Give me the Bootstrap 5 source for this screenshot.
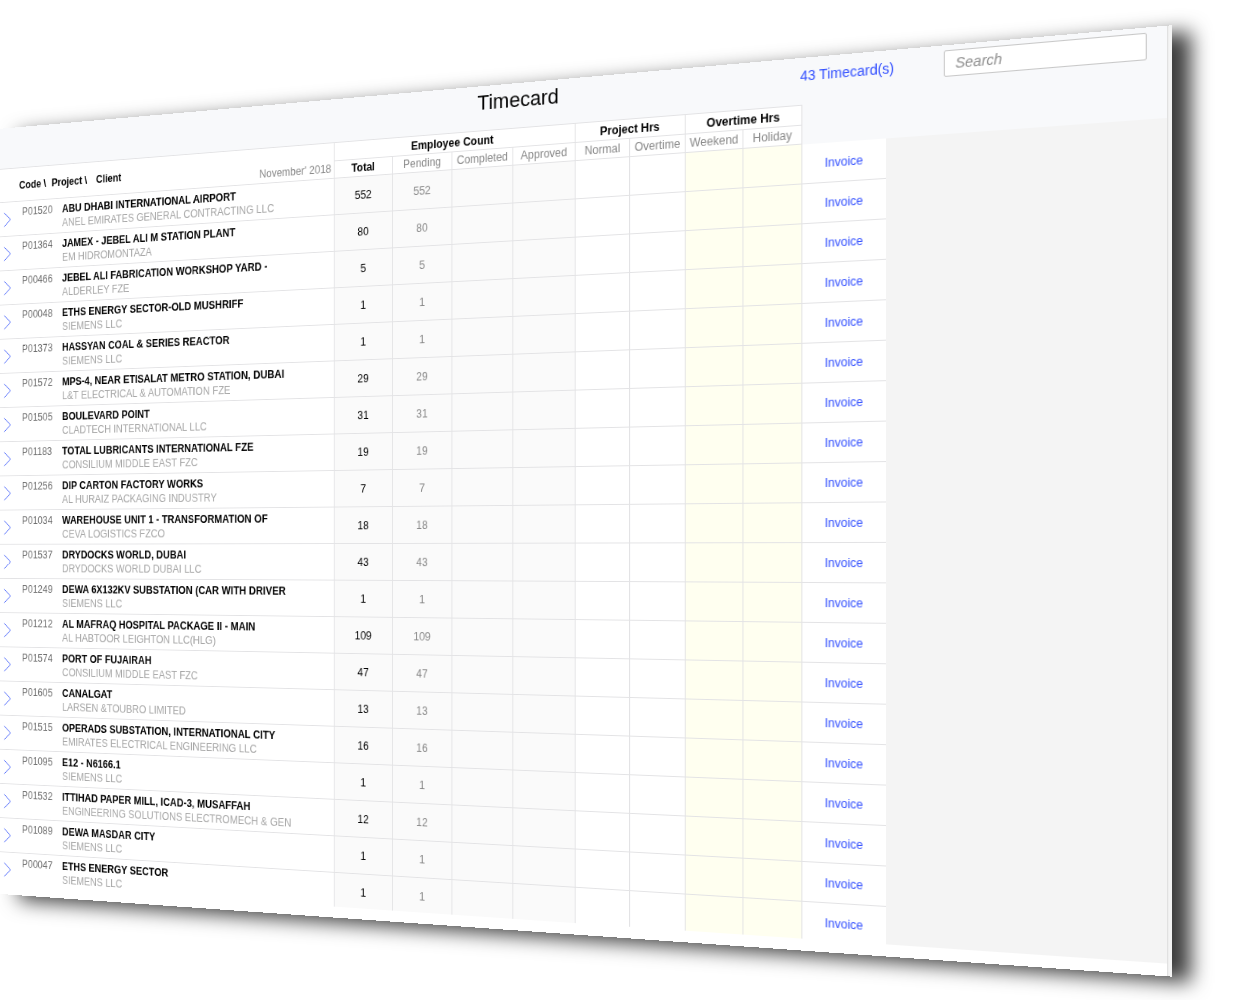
<!DOCTYPE html>
<html lang="en">
<head>
<meta charset="utf-8">
<meta name="viewport" content="width=device-width, initial-scale=1">
<title>Timecard</title>
<link href="https://cdn.jsdelivr.net/npm/bootstrap@5.3.0/dist/css/bootstrap.min.css" rel="stylesheet">
<style>
  :root { --line: #e3e3e5; --accent: #3350ff; --band: #f8f9fb; }
  body { font-family: "Liberation Sans", Arial, sans-serif; font-size: 12px; line-height: 16px; color: #000; }
  /* The shadow falls on the flat page, the sheet itself is turned in space */
  .stage { filter: drop-shadow(19px 6px 10px rgba(0, 0, 0, .76)); }
  .sheet {
    width: calc(100% + 42px);
    background: #fff;
    border-right: 3px solid #f4f4f4;
    transform-origin: 0 0;
    transform: matrix3d(.7293, -.08398, 0, -.0001515, 0, .854, 0, 0, 0, 0, 1, 0, 0, 128.8, 0, 1);
  }
  .sheet-inner { border-right: 1px solid #dedede; padding-bottom: 12px; background: linear-gradient(var(--band) 87px, #fff 87px); }
  .topbar { height: 47px; padding: 5px 18px 0 12px; }
  .topbar h1 { font-size: 22px; line-height: 26px; font-weight: 400; }
  .total-link { font-size: 14px; line-height: 26px; }
  .accent { color: var(--accent); text-decoration: none; }
  .search-box { width: 188px; height: 26px; padding: 0 10px; font-size: 14px; font-style: italic; border: 1px solid #c8c8c8; border-radius: 2px; }
  .search-box::placeholder { color: #8e8e8e; }
  .timecards { table-layout: fixed; width: 1026px; border-collapse: separate; border-spacing: 0; }
  .timecards th, .timecards td { padding: 0; border: 0 solid var(--line); text-align: center; vertical-align: middle; }
  .c-project { width: 429px; } .c-count { width: 69px; } .c-hours { width: 59px; } .c-rest { width: 60px; } .c-invoice { width: 83px; }
  .timecards thead th { height: 20px; background: #fff; border-top-width: 1px; border-right-width: 1px; }
  .timecards thead tr:first-child th[rowspan] { border-bottom-width: 1px; }
  .timecards thead tr:last-child th { font-weight: 400; color: #888; border-bottom-width: 1px; }
  .timecards thead tr:last-child th.strong-head { font-weight: 700; color: #000; }
  .timecards thead td { background: var(--band); }
  .timecards tbody td, .timecards tbody th { height: 40px; border-bottom-width: 1px; border-right-width: 1px; font-weight: 400; }
  .timecards tbody td:last-child { border-right-width: 0; }
  .timecards tbody tr:last-child > * { height: 37px; padding-top: 3px; border-bottom-width: 0; }
  .count-cell { background: #fafafa; }
  .rest-cell { background: #fffff0; }
  .soft { color: #888; }
  .project-line { padding-left: 5px; text-align: left; }
  .open-btn { width: 10px; border: 0; padding: 0; background: none; line-height: 0; }
  .code-text { width: 54px; margin-left: 15px; color: #6c6c6c; }
  .client-text { color: #a6a6a6; }
  .head-line { padding: 2px 3px 0 26px; }
  .head-code { width: 44px; } .head-project { width: 59px; }
  .rest-pane { background: #f4f4f4; margin-top: 40px; }
</style>
</head>
<body class="bg-white overflow-hidden min-vh-100">
<div class="stage">
  <div class="sheet">
    <div class="sheet-inner">
      <header class="topbar d-flex align-items-start">
        <div class="col"></div>
        <h1 class="m-0">Timecard</h1>
        <div class="col d-flex justify-content-end gap-5">
          <a href="#" class="accent total-link">43 Timecard(s)</a>
          <input type="search" class="search-box" placeholder="Search" aria-label="Search">
        </div>
      </header>
      <main class="d-flex">
        <table class="timecards flex-shrink-0">
          <colgroup>
            <col class="c-project"><col class="c-count"><col class="c-count"><col class="c-count"><col class="c-count">
            <col class="c-hours"><col class="c-hours"><col class="c-rest"><col class="c-rest"><col class="c-invoice">
          </colgroup>
          <thead>
            <tr>
              <th rowspan="2" scope="col">
                <div class="head-line d-flex align-items-center text-start">
                  <span class="head-code">Code \</span><span class="head-project">Project \</span><span>Client</span>
                  <span class="ms-auto align-self-end fw-normal soft pt-3">November' 2018</span>
                </div>
              </th>
              <th colspan="4" scope="colgroup">Employee Count</th>
              <th colspan="2" scope="colgroup">Project Hrs</th>
              <th colspan="2" scope="colgroup">Overtime Hrs</th>
              <td rowspan="2"></td>
            </tr>
            <tr>
              <th scope="col" class="strong-head">Total</th><th scope="col">Pending</th><th scope="col">Completed</th><th scope="col">Approved</th>
              <th scope="col">Normal</th><th scope="col">Overtime</th><th scope="col">Weekend</th><th scope="col">Holiday</th>
            </tr>
          </thead>
          <tbody id="rows"></tbody>
        </table>
        <aside class="rest-pane flex-fill"></aside>
      </main>
    </div>
  </div>
</div>
<script>
  const projects = [
    ["P01520", "ABU DHABI INTERNATIONAL AIRPORT", "ANEL EMIRATES GENERAL CONTRACTING LLC", 552],
    ["P01364", "JAMEX - JEBEL ALI M STATION PLANT", "EM HIDROMONTAZA", 80],
    ["P00466", "JEBEL ALI FABRICATION WORKSHOP YARD -", "ALDERLEY FZE", 5],
    ["P00048", "ETHS ENERGY SECTOR-OLD MUSHRIFF", "SIEMENS LLC", 1],
    ["P01373", "HASSYAN COAL &amp; SERIES REACTOR", "SIEMENS LLC", 1],
    ["P01572", "MPS-4, NEAR ETISALAT METRO STATION, DUBAI", "L&amp;T ELECTRICAL &amp; AUTOMATION FZE", 29],
    ["P01505", "BOULEVARD POINT", "CLADTECH INTERNATIONAL LLC", 31],
    ["P01183", "TOTAL LUBRICANTS INTERNATIONAL FZE", "CONSILIUM MIDDLE EAST FZC", 19],
    ["P01256", "DIP CARTON FACTORY WORKS", "AL HURAIZ PACKAGING INDUSTRY", 7],
    ["P01034", "WAREHOUSE UNIT 1 - TRANSFORMATION OF", "CEVA LOGISTICS FZCO", 18],
    ["P01537", "DRYDOCKS WORLD, DUBAI", "DRYDOCKS WORLD DUBAI LLC", 43],
    ["P01249", "DEWA 6X132KV SUBSTATION (CAR WITH DRIVER", "SIEMENS LLC", 1],
    ["P01212", "AL MAFRAQ HOSPITAL PACKAGE II - MAIN", "AL HABTOOR LEIGHTON LLC(HLG)", 109],
    ["P01574", "PORT OF FUJAIRAH", "CONSILIUM MIDDLE EAST FZC", 47],
    ["P01605", "CANALGAT", "LARSEN &amp;TOUBRO LIMITED", 13],
    ["P01515", "OPERADS SUBSTATION, INTERNATIONAL CITY", "EMIRATES ELECTRICAL ENGINEERING LLC", 16],
    ["P01095", "E12 - N6166.1", "SIEMENS LLC", 1],
    ["P01532", "ITTIHAD PAPER MILL, ICAD-3, MUSAFFAH", "ENGINEERING SOLUTIONS ELECTROMECH &amp; GEN", 12],
    ["P01089", "DEWA MASDAR CITY", "SIEMENS LLC", 1],
    ["P00047", "ETHS ENERGY SECTOR", "SIEMENS LLC", 1]
  ];
  document.getElementById("rows").innerHTML = projects.map(([code, name, client, count]) => `
    <tr>
      <th scope="row">
        <div class="project-line d-flex">
          <button type="button" class="open-btn" aria-label="Open ${code}">
            <svg width="10" height="18" viewBox="0 0 10 18" fill="none" stroke="#4a66fb" stroke-width="1"><path d="M.8 1 9.4 9 .8 17"/></svg>
          </button>
          <span class="code-text">${code}</span>
          <div><div class="fw-bold">${name}</div><div class="client-text">${client}</div></div>
        </div>
      </th>
      <td class="count-cell">${count}</td><td class="count-cell soft">${count}</td><td class="count-cell"></td><td class="count-cell"></td>
      <td></td><td></td><td class="rest-cell"></td><td class="rest-cell"></td>
      <td><a href="#" class="accent">Invoice</a></td>
    </tr>`).join("");
</script>
<script src="https://cdn.jsdelivr.net/npm/bootstrap@5.3.0/dist/js/bootstrap.bundle.min.js"></script>
</body>
</html>
